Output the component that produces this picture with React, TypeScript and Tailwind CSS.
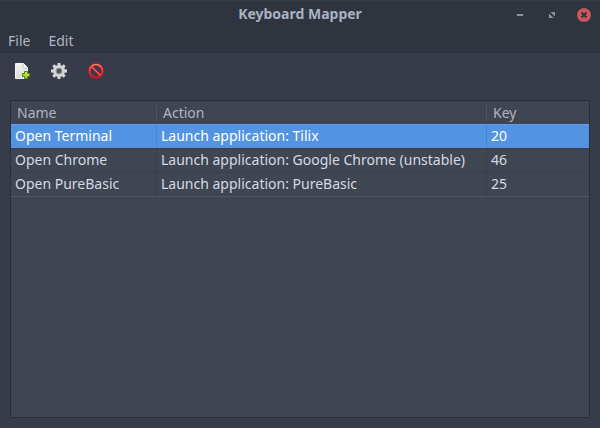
import React, { useState } from "react";

type Mapping = { name: string; action: string; key: number };

const mappings: Mapping[] = [
  { name: "Open Terminal", action: "Launch application: Tilix", key: 20 },
  { name: "Open Chrome", action: "Launch application: Google Chrome (unstable)", key: 46 },
  { name: "Open PureBasic", action: "Launch application: PureBasic", key: 25 },
];

function AddIcon() {
  return (
    <svg width="16" height="16" viewBox="0 0 16 16" aria-hidden="true">
      <defs>
        <linearGradient id="paper" x1="0" y1="0" x2="0" y2="1">
          <stop offset="0" stopColor="#f2f2f2" />
          <stop offset="1" stopColor="#dadada" />
        </linearGradient>
      </defs>
      <path d="M1.500.5h8l4 4v11h-12z" fill="url(#paper)" stroke="#f4f4f4" />
      <path d="M9 1v4h4" fill="#fff" stroke="#c4c4c4" />
      <path d="M10.500 8.500h3v2h2v3h-2v2h-3v-2h-2v-3h2z" fill="#a9d52f" stroke="#5a830f" />
      <path d="M11.500 9.500h1v2h2v1" fill="none" stroke="#d8ef86" strokeWidth=".8" />
    </svg>
  );
}

function GearIcon() {
  const angles = [0, 45, 90, 135, 180, 225, 270, 315];
  return (
    <svg width="16" height="16" viewBox="0 0 16 16" aria-hidden="true">
      <g fill="#d6d6d6">
        {angles.map((a) => (
          <path key={a} d="M6.300 3L6.600 0h2.800l.3 3z" transform={`rotate(${a} 8 8)`} />
        ))}
      </g>
      <circle cx="8" cy="8" r="4.200" fill="none" stroke="#d6d6d6" strokeWidth="3.600" />
      <circle cx="8" cy="8" r="2.700" fill="none" stroke="#8f9095" strokeWidth="1.200" />
      <circle cx="8" cy="8" r="2" fill="#50535c" />
    </svg>
  );
}

function ForbidIcon() {
  return (
    <svg width="16" height="16" viewBox="0 0 16 16" aria-hidden="true">
      <defs>
        <linearGradient id="ring" x1="0" y1="0" x2="0" y2="1">
          <stop offset="0" stopColor="#f58070" />
          <stop offset=".5" stopColor="#dc4040" />
          <stop offset="1" stopColor="#b81838" />
        </linearGradient>
      </defs>
      <circle cx="8" cy="8" r="6.500" fill="none" stroke="#a81a24" strokeWidth="3" />
      <path d="M3.500 3.500l9 9" stroke="#a81a24" strokeWidth="2.600" />
      <circle cx="8" cy="8" r="6.500" fill="none" stroke="url(#ring)" strokeWidth="1.600" />
      <path d="M3.500 3.500l9 9" stroke="#e8685e" strokeWidth="1.300" />
    </svg>
  );
}

export default function App() {
  const [selected, setSelected] = useState(0);

  return (
    <div className="flex min-h-screen flex-col bg-[#383c4a] font-['Noto_Sans','Open_Sans',sans-serif] text-sm text-[#d3dae3]">
      <header className="flex h-7 items-center border-t border-[#363b48] bg-[#2f343f] px-2">
        <span className="flex-1" />
        <h1 className="pb-px font-bold text-[#a9b2c1]">Keyboard Mapper</h1>
        <div className="flex flex-1 justify-end gap-4">
          <button type="button" aria-label="Minimize" className="size-4">
            <svg width="16" height="16" viewBox="0 0 16 16">
              <path d="M5 7h6v2H5z" fill="#90949e" />
            </svg>
          </button>
          <button type="button" aria-label="Maximize" className="size-4">
            <svg width="16" height="16" viewBox="0 0 16 16">
              <path d="M6.500 5H11v4.500zM5 6.500V11h4.500z" fill="#90949e" />
            </svg>
          </button>
          <button type="button" aria-label="Close" className="size-4">
            <svg width="16" height="16" viewBox="0 0 16 16">
              <circle cx="8" cy="8" r="7" fill="#cc575d" />
              <path d="M5.500 5.500l5 5M10.500 5.500l-5 5" stroke="#2f343f" strokeWidth="2" />
            </svg>
          </button>
        </div>
      </header>

      <nav className="flex h-[25px] items-center gap-[18px] bg-[#2f343f] px-2 text-[#afb8c6]">
        <button type="button">File</button>
        <button type="button">Edit</button>
      </nav>

      <div className="flex items-center gap-[21px] px-[14px] py-[10px]">
        <button type="button" aria-label="Add mapping"><AddIcon /></button>
        <button type="button" aria-label="Edit mapping"><GearIcon /></button>
        <button type="button" aria-label="Remove mapping"><ForbidIcon /></button>
      </div>

      <main className="mx-[10px] mt-[11px] mb-[10px] flex-1 border border-[#2b2e39] bg-[#404552]">
        <table className="w-full table-fixed border-separate border-spacing-0 text-left">
          <colgroup>
            <col className="w-[146px]" />
            <col className="w-[330px]" />
            <col />
          </colgroup>
          <thead>
            <tr className="h-[23px] text-[#b0b5be]">
              {["Name", "Action", "Key"].map((title) => (
                <th key={title} scope="col" className="group p-0 font-normal">
                  <div className="flex h-4 items-center border-r border-[#50555f] pl-[6px] group-last:border-0">{title}</div>
                </th>
              ))}
            </tr>
          </thead>
          <tbody>
            {mappings.map((m, i) => {
              const active = i === selected;
              const cell = active
                ? "border-t border-r border-t-[#5f9de6] border-r-[#4a85cd] bg-[#5294e2] pt-px pb-[2px] pl-1 text-white last:border-r-0"
                : "border-t border-r border-[#393e49] pt-px pb-[2px] pl-1 last:border-r-0";
              const bottom = i === mappings.length - 1 ? " border-b border-b-[#50555f]" : "";
              return (
                <tr key={m.name} aria-selected={active} onClick={() => setSelected(i)}>
                  <td className={cell + bottom}>{m.name}</td>
                  <td className={cell + bottom}>{m.action}</td>
                  <td className={cell + bottom}>{m.key}</td>
                </tr>
              );
            })}
          </tbody>
        </table>
      </main>
    </div>
  );
}
